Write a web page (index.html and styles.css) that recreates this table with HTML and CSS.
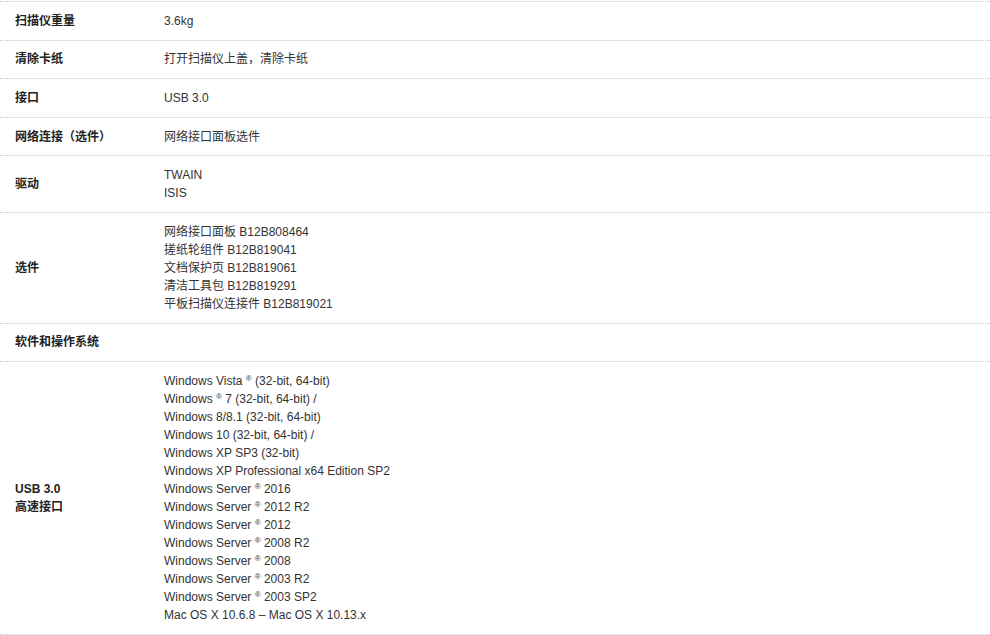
FILE: index.html
```html
<!DOCTYPE html>
<html lang="zh-CN">
    <head>
        <meta charset="UTF-8" />
        <meta name="viewport" content="width=device-width, initial-scale=1.0" />
        <title>规格</title>
        <link rel="stylesheet" href="styles.css">
    </head>
    <body>
        <div class="spec-list">
            <div class="spec-row">
                <div class="spec-label">扫描仪重量</div>
                <div class="spec-value">3.6kg</div>
            </div>
            <div class="spec-row">
                <div class="spec-label">清除卡纸</div>
                <div class="spec-value">打开扫描仪上盖，清除卡纸</div>
            </div>
            <div class="spec-row">
                <div class="spec-label">接口</div>
                <div class="spec-value">USB 3.0</div>
            </div>
            <div class="spec-row">
                <div class="spec-label">网络连接（选件）</div>
                <div class="spec-value">网络接口面板选件</div>
            </div>
            <div class="spec-row">
                <div class="spec-label">驱动</div>
                <div class="spec-value">TWAIN<br>ISIS</div>
            </div>
            <div class="spec-row">
                <div class="spec-label">选件</div>
                <div class="spec-value">
                    网络接口面板 B12B808464<br>
                    搓纸轮组件 B12B819041<br>
                    文档保护页 B12B819061<br>
                    清洁工具包 B12B819291<br>
                    平板扫描仪连接件 B12B819021
                </div>
            </div>
            <div class="spec-row">
                <div class="spec-label">软件和操作系统</div>
                <div class="spec-value"></div>
            </div>
            <div class="spec-row">
                <div class="spec-label">USB 3.0<br>高速接口</div>
                <div class="spec-value">
                    Windows Vista <sup>®</sup> (32-bit, 64-bit)<br>
                    Windows <sup>®</sup> 7 (32-bit, 64-bit) /<br>
                    Windows 8/8.1 (32-bit, 64-bit)<br>
                    Windows 10 (32-bit, 64-bit) /<br>
                    Windows XP SP3 (32-bit)<br>
                    Windows XP Professional x64 Edition SP2<br>
                    Windows Server <sup>®</sup> 2016<br>
                    Windows Server <sup>®</sup> 2012 R2<br>
                    Windows Server <sup>®</sup> 2012<br>
                    Windows Server <sup>®</sup> 2008 R2<br>
                    Windows Server <sup>®</sup> 2008<br>
                    Windows Server <sup>®</sup> 2003 R2<br>
                    Windows Server <sup>®</sup> 2003 SP2<br>
                    Mac OS X 10.6.8 – Mac OS X 10.13.x
                </div>
            </div>
        </div>
    </body>
</html>
```

FILE: styles.css
```css
body {
    margin: 0;
    padding-top: 1px;
    background: #fff;
    font-family: "Liberation Sans", Arial, "Noto Sans CJK SC", sans-serif;
    font-size: 12px;
    color: #333;
}
.spec-list {
    border-top: 1px dotted #c8c8c8;
}
.spec-row {
    display: flex;
    align-items: center;
    border-bottom: 1px dotted #c8c8c8;
    line-height: 18px;
}
.spec-label,
.spec-value {
    padding: 9.8px 15px;
    min-height: 18px;
}
.spec-label {
    flex: 0 0 119px;
    font-weight: bold;
    color: #222;
}
.spec-value {
    flex: 1;
}
.spec-value sup {
    font-size: 8px;
    line-height: 0;
    vertical-align: 4px;
}
```
